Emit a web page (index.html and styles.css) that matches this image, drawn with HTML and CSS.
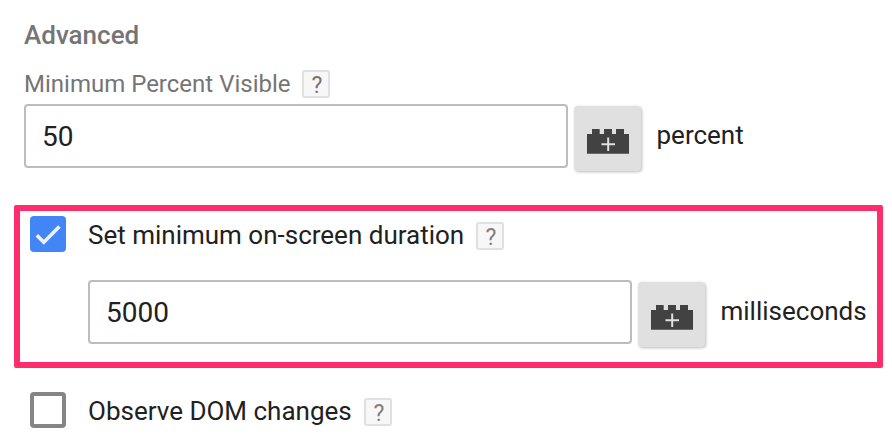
FILE: index.html
```html
<!DOCTYPE html>
<html lang="en">
<head>
<meta charset="utf-8">
<title>Advanced</title>
<link rel="stylesheet" href="styles.css">
</head>
<body>
<svg class="defs" width="0" height="0"><symbol id="brick" viewBox="0 0 42 25"><path fill="#424242" d="M0 5h5V0h7.7v5H17V0h8v5h4V0h8v5h5v19.7H0z"/><path d="M21.2 8.5v13.5M14.5 15.2h13.5" stroke="#e0e0e0" stroke-width="2"/></symbol></svg>
<main class="panel">
  <h2 class="title">Advanced</h2>
  <div class="label"><span class="label-text">Minimum Percent Visible</span><span class="help">?</span></div>
  <div class="field"><div class="input">50</div><button class="variable"><svg><use href="#brick"/></svg></button><span class="unit">percent</span></div>
  <section class="highlight">
    <div class="option"><span class="checkbox checked"><svg viewBox="0 0 36 36"><path d="M6.8 19.2l7 7L29.4 10.6" fill="none" stroke="#f0f0f0" stroke-width="3.6"/></svg></span><span class="option-text duration">Set minimum on-screen duration</span><span class="help">?</span></div>
    <div class="field nested"><div class="input">5000</div><button class="variable"><svg><use href="#brick"/></svg></button><span class="unit">milliseconds</span></div>
  </section>
  <div class="option last"><span class="checkbox"></span><span class="option-text observe">Observe DOM changes</span><span class="help">?</span></div>
</main>
</body>
</html>
```
FILE: styles.css
```css
* { box-sizing: border-box; }
body { margin: 0; background: #fff; color: #212121; font-family: Roboto, sans-serif; font-size: 26px; }
.defs { display: block; }
.panel { width: 892px; height: 448px; overflow: hidden; padding-top: 19px; }
.title { margin: 0 0 0 24px; height: 32px; line-height: 32px; font-size: 26px; font-weight: 500; color: #757575; }
.label { display: flex; align-items: center; height: 32px; margin: 17px 0 0 24px; font-size: 24px; color: #757575; }
.label-text { width: 278px; white-space: nowrap; }
.help { width: 28px; height: 28px; flex: none; border: 2px solid #e0e0e0; border-radius: 3px; background: #f7f7f7; color: #757575; padding-left: 2px; font-size: 23px; line-height: 28px; text-align: center; }
.field { display: flex; align-items: flex-start; height: 68px; margin: 4px 0 0 24px; }
.input { width: 544px; height: 64px; border: 2px solid #bdbdbd; border-radius: 4px; padding-left: 16px; font-size: 28px; line-height: 61px; }
.variable { width: 67px; height: 65px; margin: 2px 0 0 6px; padding: 6px 0 0; border: 0; border-radius: 4px; background: #e0e0e0; box-shadow: 1px 1px 3px #0004; }
.variable svg { display: block; width: 42px; height: 25px; margin: 0 auto; }
.unit { margin-left: 15.5px; line-height: 62px; white-space: nowrap; }
.highlight { width: 869px; height: 163px; margin: 33px 0 0 14px; border: 6px solid #ff2d6b; border-radius: 2px; padding: 5px 0 0 10px; }
.option { display: flex; align-items: center; height: 36px; white-space: nowrap; }
.option-text { padding-top: 2px; }
.option .help { margin-top: 4px; color: #808080; }
.checkbox { width: 36px; height: 36px; margin-right: 22px; border: 4px solid #858585; border-radius: 4px; }
.checked { border: 0; background: #4285f4; }
.checked svg { display: block; }
.duration { width: 388px; }
.observe { width: 276px; }
.nested { margin: 28px 0 0 58px; }
.last { margin: 24px 0 0 30px; }
```
